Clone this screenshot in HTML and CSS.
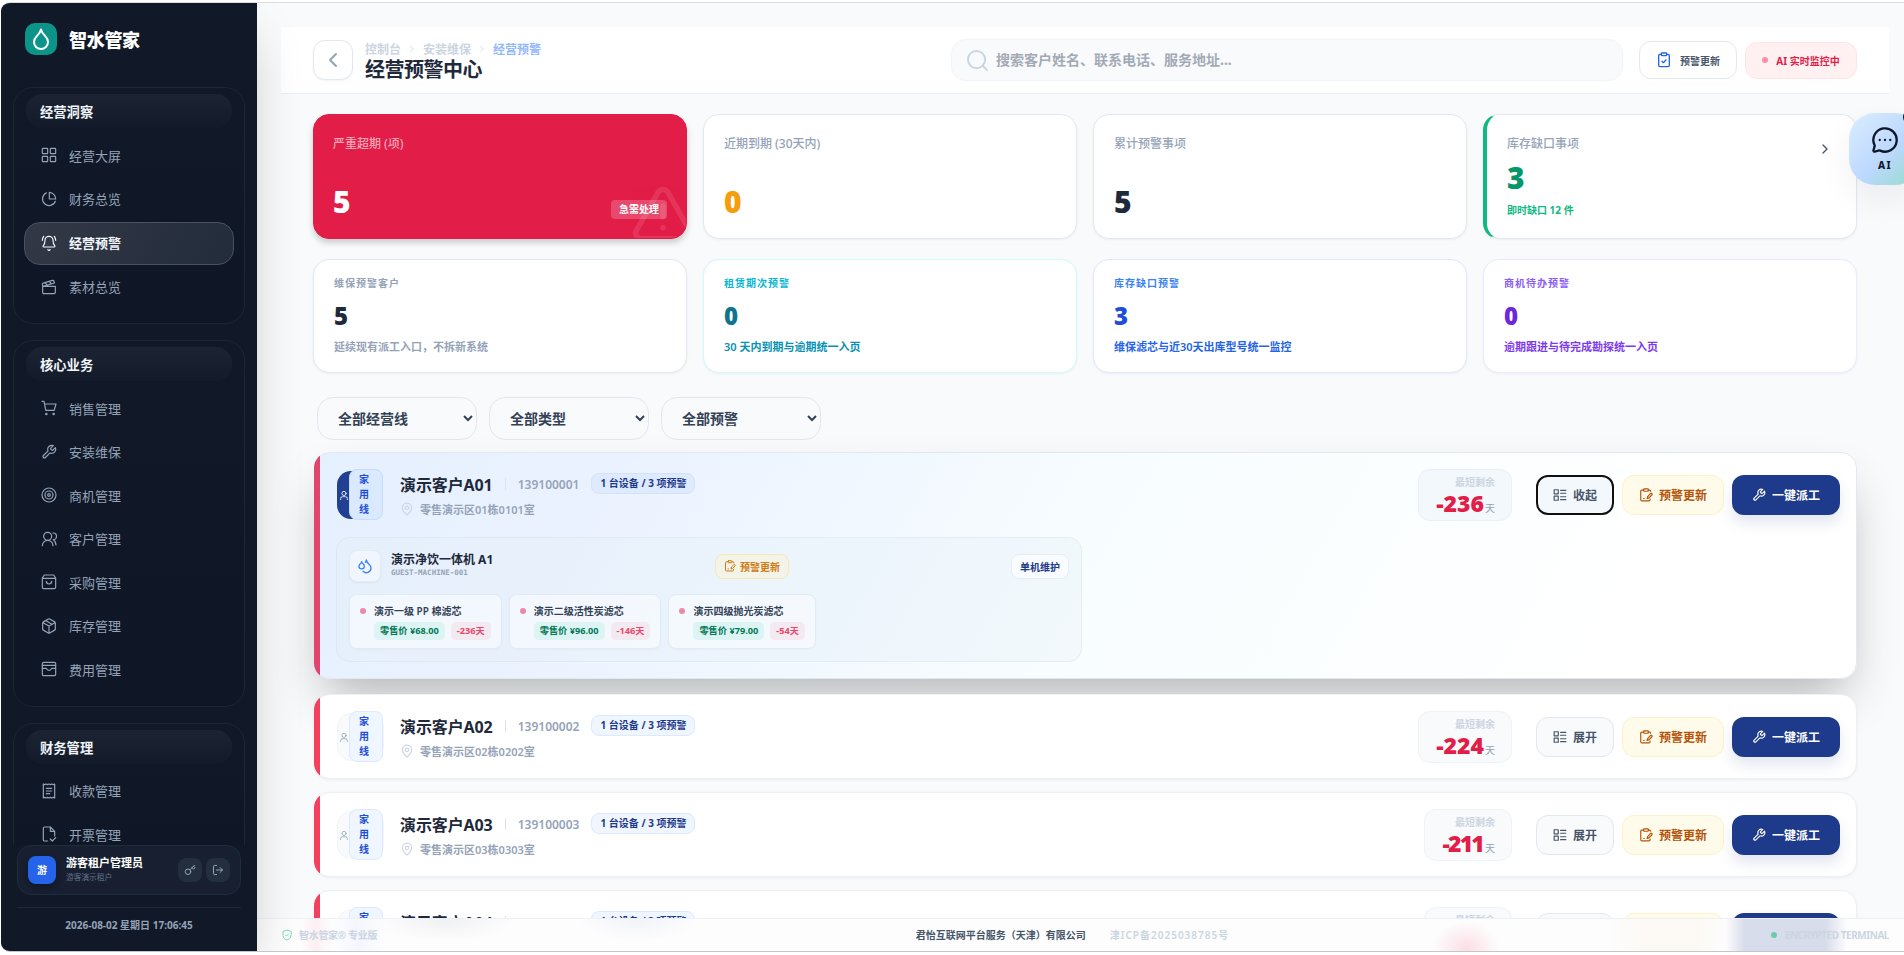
FILE: index.html
```html
<!DOCTYPE html>
<html lang="zh-CN">
<head>
    <meta charset="UTF-8">
    <meta name="viewport" content="width=device-width, initial-scale=1">
    <title>经营预警中心</title>
    <link rel="stylesheet" href="styles.css">
</head>
<body>
<svg class="sprite">
    <symbol id="i-drop" viewBox="0 0 24 24"><path d="M12 2.500c-.6 2.600-2 4.300-3.800 6.100C6.200 10.600 5 12.700 5 15a7 7 0 0 0 14 0c0-2.300-1.200-4.400-3.200-6.400C14 6.800 12.600 5.100 12 2.500Z"/></symbol>
    <symbol id="i-grid" viewBox="0 0 24 24"><rect x="2" y="2" width="8" height="8" rx="1"/><rect x="14" y="2" width="8" height="8" rx="1"/><rect x="2" y="14" width="8" height="8" rx="1"/><rect x="14" y="14" width="8" height="8" rx="1"/></symbol>
    <symbol id="i-pie" viewBox="0 0 24 24"><path d="M22 12A10 10 0 0 0 12.500 2v10Z"/><path d="M8 2.800A10 10 0 1 0 21.600 15.500"/></symbol>
    <symbol id="i-bell" viewBox="0 0 24 24"><path d="M10.300 22a2 2 0 0 0 3.400 0M4 2C2.800 3.700 2 5.700 2 8M22 8c0-2.300-.8-4.300-2-6M3.300 16.300A1 1 0 0 0 4 18h16a1 1 0 0 0 .7-1.700C19.400 15 18 12.500 18 8A6 6 0 0 0 6 8c0 4.500-1.400 7-2.700 8.300"/></symbol>
    <symbol id="i-clap" viewBox="0 0 24 24"><path d="M20.200 6 3 11l-.9-2.400c-.3-1.100.3-2.200 1.300-2.500l13.500-4c1.100-.3 2.200.3 2.500 1.300ZM6.200 5.300l3.100 3.900M12.400 3.400l3.100 4M2.500 11h19v9a2 2 0 0 1-2 2h-15a2 2 0 0 1-2-2Z"/></symbol>
    <symbol id="i-cart" viewBox="0 0 24 24"><circle cx="8" cy="21" r="1"/><circle cx="19" cy="21" r="1"/><path d="M1.500 2h3l2.700 13.500h12.500L22.500 6H5.300"/></symbol>
    <symbol id="i-wrench" viewBox="0 0 24 24"><path d="M14.700 6.300a1 1 0 0 0 0 1.400l1.600 1.600a1 1 0 0 0 1.400 0l3.800-3.800a6 6 0 0 1-7.900 7.900l-6.900 6.900a2.100 2.100 0 0 1-3-3l6.900-6.900a6 6 0 0 1 7.900-7.900Z"/></symbol>
    <symbol id="i-target" viewBox="0 0 24 24"><circle cx="12" cy="12" r="10.500"/><circle cx="12" cy="12" r="6"/><circle cx="12" cy="12" r="2"/></symbol>
    <symbol id="i-users" viewBox="0 0 24 24"><path d="M18 22a8 8 0 0 0-16 0"/><circle cx="10" cy="8" r="6"/><path d="M22.500 21c0-3.400-2-6.500-4-8a5 5 0 0 0-.5-10"/></symbol>
    <symbol id="i-bag" viewBox="0 0 24 24"><path d="M2 6v14a2 2 0 0 0 2 2h16a2 2 0 0 0 2-2V6l-3-4.500H5ZM2 6.500h20M16 11a4 4 0 0 1-8 0"/></symbol>
    <symbol id="i-box" viewBox="0 0 24 24"><path d="M21.500 7.500v9a2 2 0 0 1-1 1.700l-7.500 4.300a2 2 0 0 1-2 0l-7.500-4.300a2 2 0 0 1-1-1.700v-9a2 2 0 0 1 1-1.700L11 1.500a2 2 0 0 1 2 0l7.500 4.300a2 2 0 0 1 1 1.700ZM3 7l9 5 9-5M12 22.500V12M7.500 4l9 5.300"/></symbol>
    <symbol id="i-wallet" viewBox="0 0 24 24"><rect x="2" y="2" width="20" height="20" rx="2"/><path d="M2 6.500h20M2 11h5c1 0 1.500.5 2 1.300a3.500 3.500 0 0 0 6 0c.5-.8 1-1.300 2-1.300h5"/></symbol>
    <symbol id="i-receipt" viewBox="0 0 24 24"><path d="M3.500 1.500v21l2-1 2.200 1 2.100-1 2.200 1 2.200-1 2.100 1 2.200-1 2 1v-21l-2 1-2.200-1-2.100 1-2.200-1-2.200 1-2.100-1-2.200 1ZM8 8h8M8 12h8M8 16h5"/></symbol>
    <symbol id="i-file" viewBox="0 0 24 24"><path d="M10 22.500H5.500a2 2 0 0 1-2-2v-17a2 2 0 0 1 2-2H14l6.500 6.500v7M14 2v6h6M14 19.500l3 3 5-5"/></symbol>
    <symbol id="i-key" viewBox="0 0 24 24"><circle cx="8" cy="15.500" r="5.500"/><path d="m12 11.500 9-9M16 7.500l3 3 3-3-3-3"/></symbol>
    <symbol id="i-exit" viewBox="0 0 24 24"><path d="M9 21H5a2 2 0 0 1-2-2V5a2 2 0 0 1 2-2h4M16 17l5-5-5-5M21 12H9"/></symbol>
    <symbol id="i-left" viewBox="0 0 24 24"><path d="m15 18-6-6 6-6"/></symbol>
    <symbol id="i-right" viewBox="0 0 24 24"><path d="m9 18 6-6-6-6"/></symbol>
    <symbol id="i-search" viewBox="0 0 24 24"><circle cx="11" cy="11" r="9"/><path d="m22 22-4.500-4.500"/></symbol>
    <symbol id="i-check" viewBox="0 0 24 24"><rect x="8" y="1.500" width="8" height="4" rx="1"/><path d="M16 3.500h2a2 2 0 0 1 2 2V20a2 2 0 0 1-2 2H6a2 2 0 0 1-2-2V5.500a2 2 0 0 1 2-2h2M9 14l2 2 4-4"/></symbol>
    <symbol id="i-pen" viewBox="0 0 24 24"><rect x="8" y="1.500" width="8" height="4" rx="1"/><path d="M16 3.500h2a2 2 0 0 1 2 2M8 3.500H5a2 2 0 0 0-2 2V20a2 2 0 0 0 2 2h12a2 2 0 0 0 2-2v-1M8 18h1M19.500 9.500a1.700 1.700 0 0 1 2.500 2.500l-5 5-3 1 .8-3.300Z"/></symbol>
    <symbol id="i-list" viewBox="0 0 24 24"><rect x="2" y="3" width="7" height="7"/><rect x="2" y="14" width="7" height="7"/><path d="M13 4h9M13 9h9M13 15h9M13 20h9"/></symbol>
    <symbol id="i-user" viewBox="0 0 24 24"><circle cx="12" cy="7" r="5"/><path d="M4 22v-3a4 4 0 0 1 4-4h8a4 4 0 0 1 4 4v3"/></symbol>
    <symbol id="i-pin" viewBox="0 0 24 24"><path d="M20 10c0 5-5.500 10.200-7.400 11.800a1 1 0 0 1-1.200 0C9.500 20.200 4 15 4 10a8 8 0 0 1 16 0"/><circle cx="12" cy="10" r="3"/></symbol>
    <symbol id="i-drops" viewBox="0 0 24 24"><path d="M7 16.300c2.200 0 4-1.800 4-4 0-1.200-.6-2.300-1.700-3.200C8.100 8.200 7.300 6.900 7 5.500c-.3 1.400-1.100 2.700-2.300 3.600C3.600 10 3 11.100 3 12.300c0 2.200 1.800 4 4 4Z"/><path d="M12.600 6.600A11 11 0 0 0 14 3c.5 2.500 2 4.900 4 6.500s3 3.500 3 5.500a7 7 0 0 1-11.900 5"/></symbol>
    <symbol id="i-warn" viewBox="0 0 24 24"><path d="m21.700 18-8-14a2 2 0 0 0-3.400 0l-8 14A2 2 0 0 0 4 21h16a2 2 0 0 0 1.700-3M12 9v4M12 17h.01"/></symbol>
    <symbol id="i-chat" viewBox="0 0 24 24"><path d="M3 16.300a2 2 0 0 1 .1 1.200l-1 3.300A1 1 0 0 0 3.300 22l3.400-1a2 2 0 0 1 1.200.1A10 10 0 1 0 3 16.300ZM7.500 12h.01M12 12h.01M16.500 12h.01"/></symbol>
    <symbol id="i-shield" viewBox="0 0 24 24"><path d="M20 13c0 5-3.500 7.500-8 9-4.500-1.500-8-4-8-9V5l8-3 8 3ZM9 12l2 2 4-4"/></symbol>
</svg>

<div class="app">
    <aside class="sidebar">
        <div class="brand">
            <span class="brand-logo"><svg><use href="#i-drop"/></svg></span>
            <span class="brand-name">智水管家</span>
        </div>
        <nav class="nav">
            <div class="nav-group">
                <div class="nav-title">经营洞察</div>
                <a class="nav-item"><svg><use href="#i-grid"/></svg>经营大屏</a>
                <a class="nav-item"><svg><use href="#i-pie"/></svg>财务总览</a>
                <a class="nav-item active"><svg><use href="#i-bell"/></svg>经营预警</a>
                <a class="nav-item"><svg><use href="#i-clap"/></svg>素材总览</a>
            </div>
            <div class="nav-group">
                <div class="nav-title">核心业务</div>
                <a class="nav-item"><svg><use href="#i-cart"/></svg>销售管理</a>
                <a class="nav-item"><svg><use href="#i-wrench"/></svg>安装维保</a>
                <a class="nav-item"><svg><use href="#i-target"/></svg>商机管理</a>
                <a class="nav-item"><svg><use href="#i-users"/></svg>客户管理</a>
                <a class="nav-item"><svg><use href="#i-bag"/></svg>采购管理</a>
                <a class="nav-item"><svg><use href="#i-box"/></svg>库存管理</a>
                <a class="nav-item"><svg><use href="#i-wallet"/></svg>费用管理</a>
            </div>
            <div class="nav-group">
                <div class="nav-title">财务管理</div>
                <a class="nav-item"><svg><use href="#i-receipt"/></svg>收款管理</a>
                <a class="nav-item"><svg><use href="#i-file"/></svg>开票管理</a>
            </div>
        </nav>
        <div class="account">
            <span class="account-avatar">游</span>
            <div class="account-info">
                <div class="account-name">游客租户管理员</div>
                <div class="account-sub">游客演示租户</div>
            </div>
            <button class="account-btn"><svg><use href="#i-key"/></svg></button>
            <button class="account-btn"><svg><use href="#i-exit"/></svg></button>
        </div>
        <div class="clock">2026-08-02 星期日 17:06:45</div>
    </aside>

    <main class="main">
        <header class="header">
            <button class="back"><svg><use href="#i-left"/></svg></button>
            <div class="heading">
                <div class="crumbs"><span>控制台</span><svg><use href="#i-right"/></svg><span>安装维保</span><svg><use href="#i-right"/></svg><span class="current">经营预警</span></div>
                <h1>经营预警中心</h1>
            </div>
            <div class="search">
                <svg><use href="#i-search"/></svg>
                <input type="text" placeholder="搜索客户姓名、联系电话、服务地址...">
            </div>
            <button class="head-btn"><svg><use href="#i-check"/></svg>预警更新</button>
            <div class="monitor"><i></i>AI 实时监控中</div>
        </header>

        <div class="content">
            <section class="stats">
                <div class="stat stat-red">
                    <div class="stat-label">严重超期 (项)</div>
                    <div class="stat-value">5</div>
                    <span class="stat-badge">急需处理</span>
                    <svg class="stat-warn"><use href="#i-warn"/></svg>
                </div>
                <div class="stat">
                    <div class="stat-label">近期到期 (30天内)</div>
                    <div class="stat-value amber">0</div>
                </div>
                <div class="stat">
                    <div class="stat-label">累计预警事项</div>
                    <div class="stat-value">5</div>
                </div>
                <div class="stat stat-stock">
                    <div>
                        <div class="stat-label">库存缺口事项</div>
                        <div class="stat-value">3</div>
                        <div class="stat-note">即时缺口 12 件</div>
                    </div>
                    <svg><use href="#i-right"/></svg>
                </div>
            </section>

            <section class="lines">
                <div class="line">
                    <div class="line-label">维保预警客户</div>
                    <div class="line-value">5</div>
                    <div class="line-desc">延续现有派工入口，不拆新系统</div>
                </div>
                <div class="line cyan">
                    <div class="line-label">租赁期次预警</div>
                    <div class="line-value">0</div>
                    <div class="line-desc">30 天内到期与逾期统一入页</div>
                </div>
                <div class="line blue">
                    <div class="line-label">库存缺口预警</div>
                    <div class="line-value">3</div>
                    <div class="line-desc">维保滤芯与近30天出库型号统一监控</div>
                </div>
                <div class="line violet">
                    <div class="line-label">商机待办预警</div>
                    <div class="line-value">0</div>
                    <div class="line-desc">逾期跟进与待完成勘探统一入页</div>
                </div>
            </section>

            <div class="filters">
                <select><option>全部经营线</option></select>
                <select><option>全部类型</option></select>
                <select><option>全部预警</option></select>
            </div>

            <section class="list">
                <article class="card open">
                    <div class="card-row">
                        <div class="avatar"><svg><use href="#i-user"/></svg><span class="tag">家用线</span></div>
                        <div class="who">
                            <div class="who-top"><b>演示客户A01</b><i></i><span class="phone">139100001</span><span class="count">1 台设备 / 3 项预警</span></div>
                            <div class="addr"><svg><use href="#i-pin"/></svg>零售演示区01栋0101室</div>
                        </div>
                        <div class="remain"><small>最短剩余</small><div><b>-236</b>天</div></div>
                        <div class="actions">
                            <button class="btn focused"><svg><use href="#i-list"/></svg>收起</button>
                            <button class="btn btn-amber"><svg><use href="#i-pen"/></svg>预警更新</button>
                            <button class="btn btn-navy"><svg><use href="#i-wrench"/></svg>一键派工</button>
                        </div>
                    </div>
                    <div class="machine">
                        <div class="machine-head">
                            <span class="machine-icon"><svg><use href="#i-drops"/></svg></span>
                            <div class="machine-name">
                                <b>演示净饮一体机 A1</b>
                                <code>GUEST-MACHINE-001</code>
                            </div>
                            <button class="mini mini-amber"><svg><use href="#i-pen"/></svg>预警更新</button>
                            <button class="mini mini-last">单机维护</button>
                        </div>
                        <div class="parts">
                            <div class="part"><div class="part-name">演示一级 PP 棉滤芯</div><div class="part-tags"><span class="price">零售价 ¥68.00</span><span class="days">-236天</span></div></div>
                            <div class="part"><div class="part-name">演示二级活性炭滤芯</div><div class="part-tags"><span class="price">零售价 ¥96.00</span><span class="days">-146天</span></div></div>
                            <div class="part"><div class="part-name">演示四级抛光炭滤芯</div><div class="part-tags"><span class="price">零售价 ¥79.00</span><span class="days">-54天</span></div></div>
                        </div>
                    </div>
                </article>

                <article class="card">
                    <div class="card-row">
                        <div class="avatar"><svg><use href="#i-user"/></svg><span class="tag">家用线</span></div>
                        <div class="who">
                            <div class="who-top"><b>演示客户A02</b><i></i><span class="phone">139100002</span><span class="count">1 台设备 / 3 项预警</span></div>
                            <div class="addr"><svg><use href="#i-pin"/></svg>零售演示区02栋0202室</div>
                        </div>
                        <div class="remain"><small>最短剩余</small><div><b>-224</b>天</div></div>
                        <div class="actions">
                            <button class="btn"><svg><use href="#i-list"/></svg>展开</button>
                            <button class="btn btn-amber"><svg><use href="#i-pen"/></svg>预警更新</button>
                            <button class="btn btn-navy"><svg><use href="#i-wrench"/></svg>一键派工</button>
                        </div>
                    </div>
                </article>

                <article class="card">
                    <div class="card-row">
                        <div class="avatar"><svg><use href="#i-user"/></svg><span class="tag">家用线</span></div>
                        <div class="who">
                            <div class="who-top"><b>演示客户A03</b><i></i><span class="phone">139100003</span><span class="count">1 台设备 / 3 项预警</span></div>
                            <div class="addr"><svg><use href="#i-pin"/></svg>零售演示区03栋0303室</div>
                        </div>
                        <div class="remain"><small>最短剩余</small><div><b class="tight">-211</b>天</div></div>
                        <div class="actions">
                            <button class="btn"><svg><use href="#i-list"/></svg>展开</button>
                            <button class="btn btn-amber"><svg><use href="#i-pen"/></svg>预警更新</button>
                            <button class="btn btn-navy"><svg><use href="#i-wrench"/></svg>一键派工</button>
                        </div>
                    </div>
                </article>

                <article class="card">
                    <div class="card-row">
                        <div class="avatar"><svg><use href="#i-user"/></svg><span class="tag">家用线</span></div>
                        <div class="who">
                            <div class="who-top"><b>演示客户A04</b><i></i><span class="phone">139100004</span><span class="count">1 台设备 / 3 项预警</span></div>
                            <div class="addr"></div>
                        </div>
                        <div class="remain"><small>最短剩余</small></div>
                        <div class="actions">
                            <button class="btn"></button>
                            <button class="btn btn-amber"></button>
                            <button class="btn btn-navy"></button>
                        </div>
                    </div>
                </article>
            </section>
        </div>

        <footer class="footer">
            <div class="foot-left"><svg><use href="#i-shield"/></svg>智水管家® 专业版</div>
            <div class="foot-mid"><span>君怡互联网平台服务（天津）有限公司</span><span class="icp">津ICP备2025038785号</span></div>
            <div class="foot-right"><i></i>ENCRYPTED TERMINAL</div>
        </footer>
    </main>

    <div class="ai-float"><svg><use href="#i-chat"/></svg><span>AI</span><i></i></div>
</div>
</body>
</html>
```

FILE: styles.css
```css
* {
    box-sizing: border-box;
}
html, body {
    margin: 0;
    height: 955px;
    overflow: hidden;
    background: #fff;
    color: #1e293b;
    font-family: "Noto Sans", "Noto Sans CJK SC", sans-serif;
    font-size: 12px;
}
button, input, select {
    font-family: inherit;
    margin: 0;
}
svg {
    flex: none;
    fill: none;
    stroke: currentColor;
    stroke-width: 2;
    stroke-linecap: round;
    stroke-linejoin: round;
}
.sprite {
    display: none;
}
.app {
    position: relative;
    display: flex;
    height: 950px;
    margin: 2px 0 0 1px;
    border-top: 1px solid #dedede;
    border-bottom: 1px solid #c4c6ca;
    border-radius: 9px 0 0 9px;
    overflow: hidden;
    background: #f8fafc;
}

/* sidebar */
.sidebar {
    position: relative;
    z-index: 5;
    display: flex;
    flex-direction: column;
    width: 256px;
    flex: none;
    background: #111827;
    box-shadow: 0 25px 50px -12px rgba(0, 0, 0, .25);
}
.brand {
    display: flex;
    align-items: center;
    gap: 12px;
    height: 84px;
    padding: 0 24px 26px;
    flex: none;
}
.brand-logo {
    display: flex;
    align-items: center;
    justify-content: center;
    width: 32px;
    height: 32px;
    margin-top: 14px;
    border-radius: 10px;
    background: #0d9488;
    color: #fff;
}
.brand-logo svg {
    width: 24px;
    height: 24px;
}
.brand-name {
    margin-top: 13px;
    color: #fff;
    font-size: 18px;
    font-weight: 800;
    letter-spacing: -.3px;
}
.nav {
    flex: 1;
    min-height: 0;
    padding: 0 12px;
    overflow: hidden;
}
.nav-group {
    display: flex;
    flex-direction: column;
    gap: 2px;
    margin-bottom: 16px;
    padding: 6px 10px 15px;
    border: 1px solid #1c2635;
    border-radius: 20px;
    background: linear-gradient(#111827, #0f1726);
}
.nav-title {
    height: 34px;
    margin: 0 2px 5px;
    padding: 0 14px;
    border-radius: 16px;
    background: linear-gradient(#1c2434, #131b2a);
    color: #f1f5f9;
    font-size: 13.300px;
    font-weight: 700;
    line-height: 36px;
}
.nav-item {
    display: flex;
    align-items: center;
    gap: 12px;
    height: 41.500px;
    padding: 0 16px 1px;
    border: 1px solid transparent;
    border-radius: 16px;
    color: #94a3b8;
    font-size: 13px;
}
.nav-item svg {
    width: 16px;
    height: 16px;
    stroke-width: 1.800;
}
.nav-item.active {
    height: 42.500px;
    border-color: #475264;
    background: linear-gradient(120deg, #333846, #222c3b);
    color: #f1f5f9;
    font-weight: 700;
}
.account {
    display: flex;
    align-items: center;
    height: 50px;
    margin: 0 16px;
    padding: 0 10px;
    border: 1px solid #1e2d3d;
    border-radius: 14px;
    background: #171f30;
    flex: none;
}
.account-avatar {
    width: 28px;
    height: 28px;
    border-radius: 8px;
    background: #2563eb;
    color: #fff;
    font-size: 10px;
    font-weight: 700;
    line-height: 28px;
    text-align: center;
    box-shadow: 0 3px 6px rgba(0, 0, 0, .3);
}
.account-info {
    flex: 1;
    padding-left: 10px;
    margin-top: -1px;
}
.account-name {
    color: #fff;
    font-size: 11px;
    font-weight: 700;
    line-height: 16px;
}
.account-sub {
    color: #64748b;
    font-size: 7.700px;
    line-height: 13px;
}
.account-btn {
    display: flex;
    align-items: center;
    justify-content: center;
    width: 24px;
    height: 24px;
    margin-left: 4px;
    padding: 0;
    border: 0;
    border-radius: 8px;
    background: #232e3e;
    color: #94a3b8;
}
.account-btn svg {
    width: 12px;
    height: 12px;
}
.clock {
    height: 44px;
    margin: 12px 16px 0;
    border-top: 1px solid #1f2937;
    color: #94a3b8;
    font-size: 10px;
    font-weight: 700;
    line-height: 35px;
    text-align: center;
    flex: none;
}

/* main */
.main {
    position: relative;
    flex: 1;
    min-width: 0;
    display: flex;
    flex-direction: column;
}
.header {
    display: flex;
    align-items: center;
    height: 67px;
    flex: none;
    margin: 24px 15px 0 24px;
    padding: 0 32px;
    border-bottom: 1px solid #eceff4;
    background: #fff;
}
.back {
    display: flex;
    align-items: center;
    justify-content: center;
    width: 40px;
    height: 40px;
    padding: 0;
    border: 1px solid #e2e8f0;
    border-radius: 12px;
    background: #fff;
    color: #94a3b8;
    box-shadow: 0 1px 2px rgba(0, 0, 0, .05);
}
.back svg {
    width: 24px;
    height: 24px;
}
.heading {
    width: 598px;
    padding: 3px 0 0 12px;
}
.crumbs {
    display: flex;
    align-items: center;
    height: 16px;
    color: #cbd5e1;
    font-weight: 700;
}
.crumbs svg {
    width: 10px;
    height: 10px;
    margin: 0 6px;
}
.crumbs .current {
    color: #93b8fd;
}
h1 {
    margin: 0;
    font-size: 20px;
    font-weight: 700;
    letter-spacing: -.5px;
    line-height: 25px;
}
.search {
    display: flex;
    align-items: center;
    gap: 7px;
    width: 672px;
    height: 42px;
    margin-right: 16px;
    padding: 0 14px;
    border: 1px solid #f1f5f9;
    border-radius: 14px;
    background: #f8fafc;
    color: #cbd5e1;
}
.search svg {
    width: 23px;
    height: 23px;
}
.search input {
    flex: 1;
    padding: 0 0 1px;
    border: 0;
    outline: 0;
    background: none;
    font-size: 14px;
    font-weight: 700;
}
.search input::placeholder {
    color: #a3aab6;
}
.head-btn {
    display: flex;
    align-items: center;
    gap: 8px;
    width: 98px;
    height: 38px;
    padding: 0 0 0 16px;
    border: 1px solid #e2e8f0;
    border-radius: 12px;
    background: #fff;
    color: #475569;
    font-size: 10px;
    font-weight: 700;
    white-space: nowrap;
}
.head-btn svg {
    width: 16px;
    height: 16px;
    color: #2563eb;
}
.monitor {
    display: flex;
    align-items: center;
    justify-content: center;
    width: 112px;
    height: 37px;
    margin-left: 8px;
    border: 1px solid #ffe4e6;
    border-radius: 12px;
    background: #fff0f1;
    color: #e11d48;
    font-size: 10px;
    font-weight: 700;
}
.monitor i {
    width: 6px;
    height: 6px;
    margin-right: 8px;
    border-radius: 50%;
    background: #fb8fa1;
}
.content {
    flex: 1;
    min-height: 0;
    padding: 20px 47px 0 56px;
    overflow: hidden;
}
.stats, .lines {
    display: grid;
    grid-template-columns: repeat(4, 1fr);
    gap: 16px;
}
.stat {
    position: relative;
    display: flex;
    flex-direction: column;
    justify-content: space-between;
    height: 125px;
    padding: 21px 20px 20px;
    border: 1px solid #e2e8f0;
    border-radius: 16px;
    background: #fff;
    box-shadow: 0 1px 3px rgba(0, 0, 0, .05);
    overflow: hidden;
}
.stat-label {
    color: #94a3b8;
    font-weight: 500;
    line-height: 16px;
}
.stat-value {
    font-size: 30px;
    font-weight: 900;
    line-height: 32px;
}
.stat-value.amber {
    color: #f59e0b;
}
.stat-red {
    padding-left: 19px;
    border-color: #e11d48;
    background: #e11d48;
    color: #fff;
    box-shadow: 0 4px 6px rgba(0, 0, 0, .18);
}
.stat-red .stat-label {
    color: #f6a5b6;
}
.stat-badge {
    position: absolute;
    right: 19px;
    bottom: 19px;
    height: 19px;
    padding: 0 8px;
    border-radius: 4px;
    background: rgba(255, 255, 255, .2);
    font-size: 10px;
    font-weight: 700;
    line-height: 19px;
}
.stat-warn {
    position: absolute;
    right: -10px;
    bottom: -9px;
    width: 66px;
    height: 66px;
    opacity: .1;
}
.stat-stock {
    flex-direction: row;
    border-left: 4px solid #10b981;
}
.stat-stock .stat-value {
    margin: 10px 0 8px;
    color: #059669;
}
.stat-stock .stat-note {
    color: #10b981;
    font-size: 10px;
    font-weight: 700;
    line-height: 16px;
}
.stat-stock > svg {
    width: 16px;
    height: 16px;
    margin: 5px 3px 0 0;
    color: #475569;
}
.lines {
    margin-top: 20px;
}
.line {
    height: 114px;
    padding: 16px 20px;
    border: 1px solid #e2e8f0;
    border-radius: 16px;
    background: #fff;
    color: #94a3b8;
    box-shadow: 0 1px 3px rgba(0, 0, 0, .05);
}
.line-label {
    font-size: 10px;
    font-weight: 700;
    letter-spacing: 1px;
    line-height: 15px;
}
.line-value {
    margin: 9px 0 6px;
    color: #1e293b;
    font-size: 24px;
    font-weight: 900;
    line-height: 32px;
}
.line-desc {
    font-size: 11px;
    font-weight: 600;
    line-height: 17px;
}
.cyan { border-color: #cffafe; }
.cyan .line-label { color: #06b6d4; }
.cyan .line-value { color: #0e7490; }
.cyan .line-desc { color: #0891b2; }
.blue { border-color: #dbeafe; }
.blue .line-label { color: #3b82f6; }
.blue .line-value { color: #1d4ed8; }
.blue .line-desc { color: #2563eb; }
.violet { border-color: #ede9fe; }
.violet .line-label { color: #8b5cf6; }
.violet .line-value { color: #6d28d9; }
.violet .line-desc { color: #7c3aed; }

.filters {
    display: flex;
    gap: 12px;
    margin-top: 24px;
    padding-left: 4px;
}
.filters select {
    width: 160px;
    height: 43px;
    padding: 0 0 1px 16px;
    border: 1px solid #e2e8f0;
    border-radius: 16px;
    background: #f8fafc;
    color: #334155;
    font-size: 14px;
    font-weight: 700;
}

/* customer cards */
.list {
    display: flex;
    flex-direction: column;
    gap: 13px;
    margin: 12px 0 0 1px;
}
.card {
    position: relative;
    height: 85px;
    flex: none;
    padding: 16px 16px 0 22px;
    border: 1px solid #edf0f5;
    border-radius: 16px;
    background: #fff;
    box-shadow: 0 1px 3px rgba(0, 0, 0, .06);
}
.card::before {
    content: "";
    position: absolute;
    inset: -1px;
    border-radius: 16px;
    background: linear-gradient(90deg, #f43f5e 6px, transparent 6px);
    pointer-events: none;
}
.card.open {
    height: 227px;
    margin-bottom: 2px;
    border-color: #e2e8f0;
    background: linear-gradient(120deg, #e5f0fe 0%, #ebf2ff 18%, #f0f7ff 32%, #f8fdff 52%, #fff 85%);
    box-shadow: 0 25px 50px -12px rgba(0, 0, 0, .3);
}
.card.open::before {
    background: linear-gradient(90deg, #e0456d 6px, transparent 6px);
}
.card-row {
    display: flex;
    align-items: center;
    height: 52px;
}
.avatar {
    position: relative;
    width: 47px;
    height: 48px;
    padding: 17px 0 0 1px;
    border: 1px solid #f1f5f9;
    border-radius: 14px;
    background: #f8fafc;
    color: #94a3b8;
    flex: none;
}
.avatar svg {
    display: block;
    width: 10px;
    height: 13px;
}
.open .avatar {
    border-color: transparent;
    background: linear-gradient(90deg, #214093 30px, transparent 30px) no-repeat border-box;
    color: #fff;
}
.tag {
    position: absolute;
    top: -3px;
    left: 11px;
    width: 34px;
    height: 51px;
    padding: 2px 13px 0 9px;
    border: 1px solid #dbeafe;
    border-radius: 8px;
    background: #eff6ff;
    color: #1d4ed8;
    font-size: 10px;
    font-weight: 700;
    line-height: 15px;
    word-break: break-all;
}
.open .tag {
    border-color: #c5dcfc;
    background: #dbe9fe;
}
.who {
    flex: 1;
    padding-left: 16px;
}
.who-top {
    display: flex;
    align-items: center;
    height: 22px;
}
.who-top b {
    font-size: 16px;
    font-weight: 700;
    letter-spacing: -.1px;
}
.who-top i {
    width: 1px;
    height: 12px;
    margin: 0 12px;
    background: #dde3ec;
}
.phone {
    margin-top: 1px;
    color: #94a3b8;
    font-weight: 600;
}
.count {
    height: 21px;
    margin: -1px 0 0 12px;
    padding: 0 8px;
    border: 1px solid #dbeafe;
    border-radius: 8px;
    background: #eff6ff;
    color: #1e3a8a;
    font-size: 10px;
    font-weight: 700;
    line-height: 19px;
}
.open .count {
    border-color: #d0e3fb;
    background: #deebfe;
}
.addr {
    display: flex;
    align-items: center;
    gap: 6px;
    height: 16px;
    margin-top: 6px;
    color: #94a3b8;
    font-size: 11px;
    font-weight: 600;
}
.addr svg {
    width: 14px;
    height: 14px;
    color: #cbd5e1;
}
.remain {
    min-width: 88px;
    height: 52px;
    margin-right: 24px;
    padding: 4px 16px 0 17px;
    border: 1px solid #edf3f9;
    border-radius: 12px;
    background: #f8fafc;
    color: #94a3b8;
    text-align: right;
}
.open .remain {
    border-color: #e8f0f8;
    background: #f3f8fd;
}
.remain small {
    display: block;
    color: #cbd5e1;
    font-size: 10px;
    font-weight: 700;
    line-height: 16px;
}
.remain div {
    font-size: 10px;
    line-height: 26px;
    white-space: nowrap;
}
.remain b {
    margin-right: 1px;
    color: #e11d48;
    font-size: 23px;
    font-weight: 900;
}
.remain .tight {
    margin-right: 2px;
    letter-spacing: -1.800px;
}
.actions {
    display: flex;
    gap: 8px;
}
.btn {
    display: flex;
    align-items: center;
    justify-content: center;
    gap: 6px;
    width: 78px;
    height: 40px;
    padding: 0;
    border: 1px solid #e2e8f0;
    border-radius: 12px;
    background: #f8fafc;
    color: #475569;
    font-size: 12px;
    font-weight: 700;
}
.btn svg {
    width: 14px;
    height: 14px;
}
.btn.focused {
    border: 2px solid #101010;
    background: #f3f8fd;
}
.btn-amber {
    width: 102px;
    border-color: #fef3c7;
    background: #fffbeb;
    color: #b45309;
}
.btn-navy {
    width: 108px;
    border: 0;
    background: #1e3a8a;
    color: #fff;
    box-shadow: 0 8px 14px rgba(30, 58, 138, .12);
}

/* expanded device */
.machine {
    width: 746px;
    height: 125px;
    margin-top: 16px;
    margin-left: -1px;
    padding: 12px;
    border: 1px solid rgba(203, 213, 225, .3);
    border-radius: 14px;
    background: rgba(228, 238, 243, .28);
}
.machine-head {
    display: flex;
    align-items: center;
    height: 32px;
}
.machine-icon {
    display: flex;
    align-items: center;
    justify-content: center;
    width: 32px;
    height: 32px;
    border: 1px solid #e2ebf7;
    border-radius: 8px;
    background: #f1f6fe;
    color: #3b82f6;
    box-shadow: 0 1px 2px rgba(0, 0, 0, .05);
}
.machine-icon svg {
    width: 16px;
    height: 16px;
}
.machine-name {
    width: 324px;
    margin: -3px 0 0 10px;
}
.machine-name b {
    display: block;
    font-size: 12px;
    line-height: 17px;
}
.machine-name code {
    display: block;
    color: #94a3b8;
    font-family: "DejaVu Sans Mono", monospace;
    font-size: 7.500px;
    font-weight: 700;
    line-height: 10px;
}
.mini {
    display: flex;
    align-items: center;
    justify-content: center;
    gap: 4px;
    height: 25px;
    padding: 0;
    border: 1px solid #e6edf5;
    border-radius: 8px;
    background: #f8fcff;
    color: #1e3a8a;
    font-size: 10px;
    font-weight: 700;
}
.mini svg {
    width: 12px;
    height: 12px;
}
.mini-amber {
    width: 74px;
    border-color: #f5e9b8;
    background: #f4f3e8;
    color: #d07a14;
}
.mini-last {
    width: 58px;
    margin-left: auto;
}
.parts {
    display: flex;
    gap: 7px;
    margin-top: 12px;
}
.part {
    height: 55px;
    padding: 8px 10px 0 24px;
    border: 1px solid #e2eaf4;
    border-radius: 8px;
    background: rgba(248, 251, 255, .7);
    box-shadow: 0 1px 2px rgba(0, 0, 0, .03);
}
.part-name {
    display: flex;
    align-items: center;
    color: #334155;
    font-size: 10px;
    font-weight: 600;
    line-height: 16px;
}
.part-name::before {
    content: "";
    width: 6px;
    height: 6px;
    margin: 0 8px 0 -14px;
    border-radius: 50%;
    background: #e98ba4;
}
.part-tags {
    display: flex;
    gap: 6px;
    margin-top: 3px;
    font-size: 9.200px;
    font-weight: 700;
    line-height: 18px;
}
.price {
    padding: 0 6px;
    border-radius: 5px;
    background: #dcf4f3;
    color: #047857;
}
.days {
    padding: 0 6px;
    border-radius: 5px;
    background: #f3e9f1;
    color: #ef4467;
}

/* footer */
.footer {
    display: flex;
    align-items: center;
    height: 33px;
    flex: none;
    padding: 0 15px 1px 24px;
    border-top: 1px solid #edf0f5;
    /* soft colours of the card passing under the bar */
    background:
        radial-gradient(ellipse 34px 28px at 1209px 30px, rgba(244, 63, 94, .16), transparent),
        linear-gradient(90deg, transparent 1468px, rgba(30, 58, 138, .17) 1488px, rgba(30, 58, 138, .17) 1568px, transparent 1590px),
        linear-gradient(90deg, transparent 1350px, rgba(245, 158, 11, .04) 1390px, rgba(245, 158, 11, .04) 1440px, transparent 1470px),
        linear-gradient(90deg, transparent 44px, rgba(244, 63, 94, .08) 58px, transparent 74px),
        linear-gradient(90deg, transparent 76px, rgba(59, 130, 246, .05) 100px, transparent 130px),
        radial-gradient(ellipse 70px 22px at 188px 0, rgba(30, 41, 59, .06), transparent),
        radial-gradient(ellipse 60px 22px at 380px 0, rgba(30, 58, 138, .05), transparent),
        #fdfdfe;
    color: #cbd5e1;
    font-size: 10px;
    font-weight: 700;
}
.foot-left, .foot-right {
    display: flex;
    align-items: center;
    flex: 1;
}
.foot-left {
    letter-spacing: -.3px;
}
.foot-left svg {
    width: 12px;
    height: 12px;
    margin-right: 6px;
    color: #7ddbb9;
}
.foot-mid {
    display: flex;
    gap: 24px;
    margin-right: 25px;
    color: #475569;
    font-weight: 600;
}
.foot-mid .icp {
    color: #cbd5e1;
    letter-spacing: 1px;
}
.foot-right {
    justify-content: flex-end;
    margin-left: -25px;
    padding-left: 25px;
    letter-spacing: -.45px;
}
.foot-right i {
    width: 6px;
    height: 6px;
    margin-right: 8px;
    border-radius: 50%;
    background: #6bcbb0;
}
.ai-float {
    position: absolute;
    top: 110px;
    right: -17px;
    z-index: 6;
    display: flex;
    flex-direction: column;
    align-items: center;
    gap: 2px;
    width: 72px;
    height: 72px;
    padding-top: 13px;
    border-radius: 26px;
    background: linear-gradient(135deg, #dbeeff, #bcd8fe 55%, #94dcc8);
    color: #0f172a;
    box-shadow: 0 14px 34px rgba(15, 23, 42, .06);
}
.ai-float svg {
    width: 28px;
    height: 28px;
}
.ai-float span {
    font-size: 10px;
    font-weight: 800;
    letter-spacing: 1.500px;
    line-height: 18px;
}
.ai-float i {
    position: absolute;
    top: -3px;
    left: 54px;
    width: 14px;
    height: 14px;
    border-radius: 50%;
    background: #0f172a;
}
```
